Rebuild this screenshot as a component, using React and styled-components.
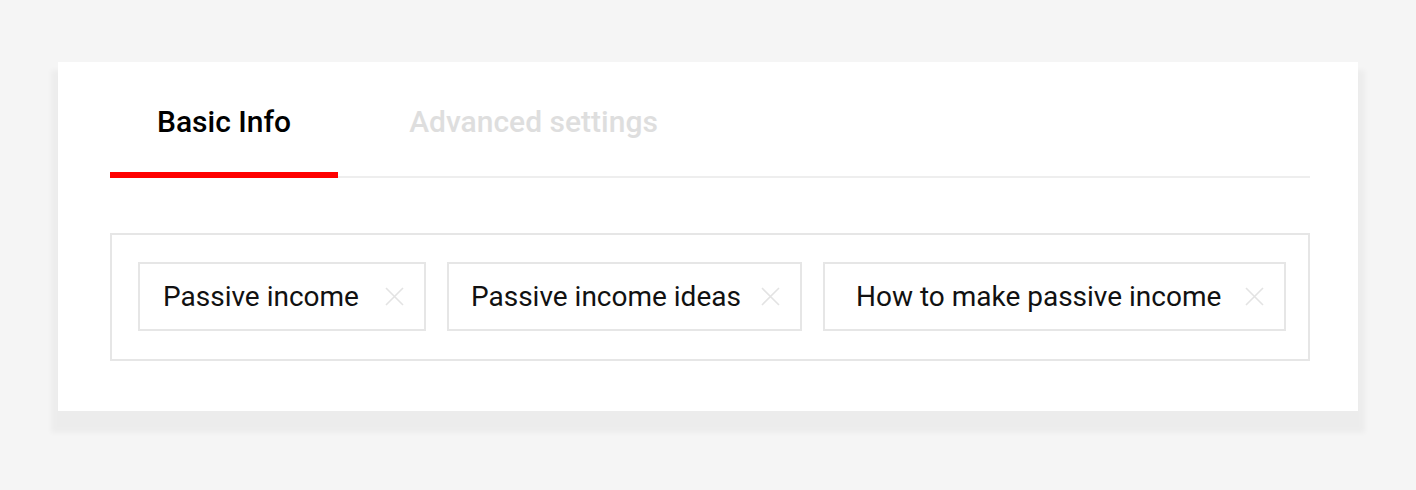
import React, { useState } from "react";
import styled, { createGlobalStyle } from "styled-components";

const GlobalStyle = createGlobalStyle`
  html, body {
    margin: 0;
    padding: 0;
    background: #f5f5f5;
    font-family: Roboto, "Liberation Sans", Arial, sans-serif;
  }
`;

const Page = styled.div`
  padding: 62px 0 0 58px;
  min-height: 490px;
  box-sizing: border-box;
`;

const Card = styled.div`
  width: 1300px;
  box-sizing: border-box;
  background: #fff;
  padding: 0 48px 50px 52px;
  box-shadow: 0 15px 5px 7px rgba(0, 0, 0, 0.035);
`;

const TabBar = styled.div`
  display: flex;
  border-bottom: 2px solid #eeeeee;
  margin-bottom: 55px;
`;

const Tab = styled.button`
  position: relative;
  border: 0;
  background: none;
  margin: 0 ${(p) => p.gap || 0}px 0 0;
  padding: 42px 47px 37px;
  font-family: inherit;
  font-size: 30px;
  line-height: 35px;
  font-weight: 500;
  color: ${(p) => (p.active ? "#000" : "#dedede")};
  cursor: pointer;

  &::after {
    content: "";
    display: ${(p) => (p.active ? "block" : "none")};
    position: absolute;
    left: 0;
    right: 0;
    bottom: -2px;
    height: 6px;
    background: #ff0000;
  }
`;

const TagBox = styled.div`
  display: flex;
  flex-wrap: wrap;
  gap: 21px;
  border: 2px solid #e6e6e6;
  padding: 27px 16px 28px 26px;
`;

const Tag = styled.div`
  display: flex;
  align-items: center;
  height: 69px;
  box-sizing: border-box;
  border: 2px solid #e6e6e6;
  padding: 0 20px 0 ${(p) => p.lead || 23}px;
  font-size: 28px;
  color: #111;
  white-space: nowrap;
`;

const Remove = styled.button`
  display: flex;
  border: 0;
  background: none;
  padding: 0;
  margin-left: ${(p) => p.space || 26}px;
  cursor: pointer;
`;

const CloseIcon = () => (
  <svg width="19" height="19" viewBox="0 0 19 19" fill="none">
    <path d="M1 1L18 18M18 1L1 18" stroke="#e3e3e3" strokeWidth="1.6" />
  </svg>
);

const initialTags = [
  { label: "Passive income", lead: 23, space: 26 },
  { label: "Passive income ideas", lead: 22, space: 20 },
  { label: "How to make passive income", lead: 31, space: 24 },
];

export default function App() {
  const [tab, setTab] = useState(0);
  const [tags, setTags] = useState(initialTags);

  return (
    <>
      <GlobalStyle />
      <Page>
        <Card>
          <TabBar>
            <Tab active={tab === 0} gap={24} onClick={() => setTab(0)}>
              Basic Info
            </Tab>
            <Tab active={tab === 1} onClick={() => setTab(1)}>
              Advanced settings
            </Tab>
          </TabBar>
          <TagBox>
            {tags.map((t) => (
              <Tag key={t.label} lead={t.lead}>
                {t.label}
                <Remove
                  space={t.space}
                  onClick={() => setTags(tags.filter((x) => x !== t))}
                >
                  <CloseIcon />
                </Remove>
              </Tag>
            ))}
          </TagBox>
        </Card>
      </Page>
    </>
  );
}
